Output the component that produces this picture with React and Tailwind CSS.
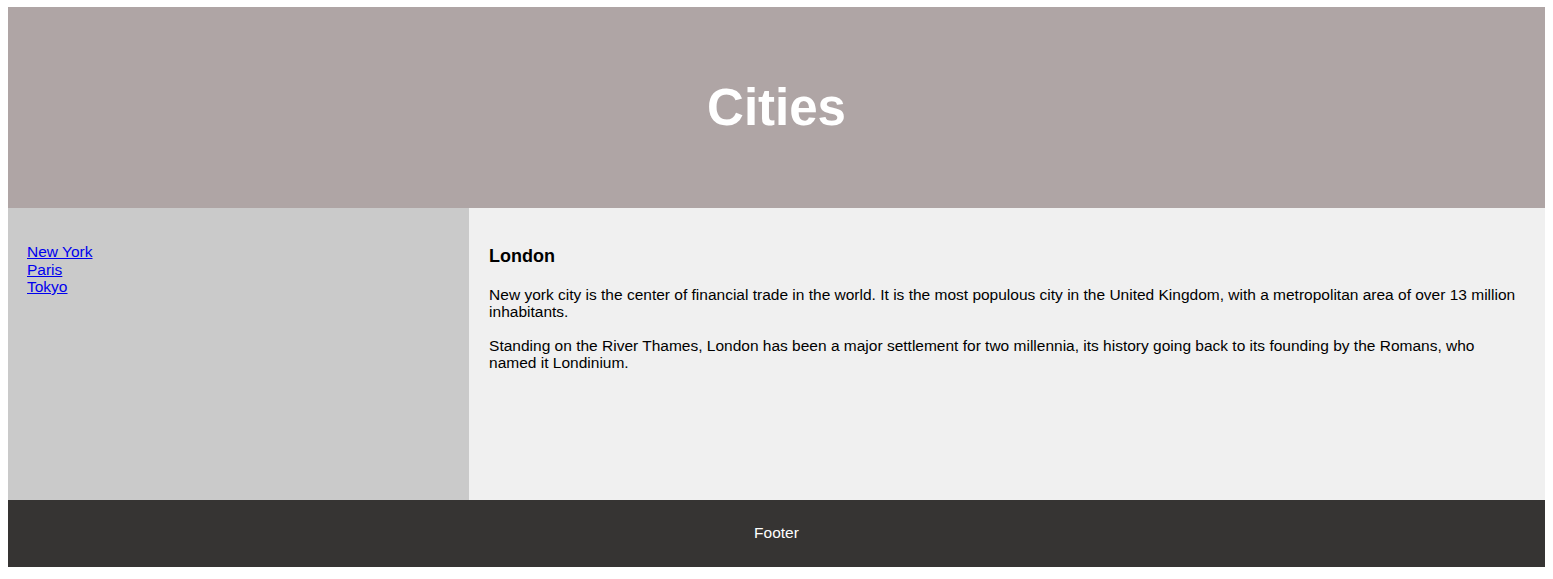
export default function App() {
  return (
    <div className="px-[8px] pt-[7px] font-['Liberation_Sans',Arial,sans-serif] text-[15.5px] leading-[17px] text-black">
      <header className="flex h-[201px] items-center justify-center bg-[#afa5a5]">
        <h2 className="text-[51px] leading-[58px] font-bold text-white">Cities</h2>
      </header>

      <section className="flex h-[292px]">
        <nav className="w-[30%] bg-[#cacaca] px-[19px] py-[35px]">
          <ul className="flex flex-col leading-[17.5px]">
            <li>
              <a href="#" className="text-[#0000ee] underline">New York</a>
            </li>
            <li>
              <a href="#" className="text-[#0000ee] underline">Paris</a>
            </li>
            <li>
              <a href="#" className="text-[#0000ee] underline">Tokyo</a>
            </li>
          </ul>
        </nav>

        <article className="w-[70%] bg-[#f0f0f0] px-[20px] pt-[38px]">
          <h3 className="text-[18px] leading-[21px] font-bold">London</h3>
          <p className="mt-[19px]">
            New york city is the center of financial trade in the world. It is the most populous city in the United Kingdom, with a metropolitan area of over 13 million inhabitants.
          </p>
          <p className="mt-[17px]">
            Standing on the River Thames, London has been a major settlement for two millennia, its history going back to its founding by the Romans, who named it Londinium.
          </p>
        </article>
      </section>

      <footer className="flex h-[67px] items-center justify-center bg-[#363433] pb-[2px] text-white">
        <p>Footer</p>
      </footer>
    </div>
  );
}
